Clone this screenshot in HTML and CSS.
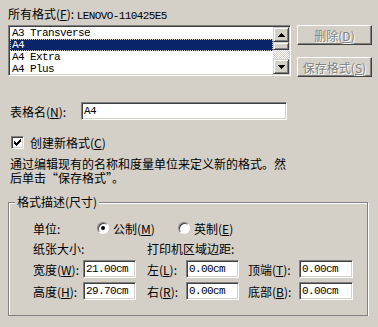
FILE: index.html
```html
<!DOCTYPE html>
<html lang="zh-CN">
<head>
    <meta charset="UTF-8">
    <title>格式</title>
    <link rel="stylesheet" href="styles.css">
</head>
<body>
    <div class="dialog">
        <div class="head">所有格式(<u>F</u>): <span class="mono">LENOVO-110425E5</span></div>

        <div class="list-row">
            <div class="listbox">
                <ul class="items mono">
                    <li>A3 Transverse</li>
                    <li class="sel">A4</li>
                    <li>A4 Extra</li>
                    <li>A4 Plus</li>
                </ul>
                <div class="scrollbar">
                    <div class="sb-btn">
                        <svg width="7" height="4" viewBox="0 0 7 4"><path d="M3 0h1v1h1v1h1v1h1v1H0V3h1V2h1V1h1z" fill="#000"/></svg>
                    </div>
                    <div class="sb-thumb"></div>
                    <div class="sb-track"></div>
                    <div class="sb-btn">
                        <svg width="7" height="4" viewBox="0 0 7 4"><path d="M0 0h7v1H6v1H5v1H4v1H3V3H2V2H1V1H0z" fill="#000"/></svg>
                    </div>
                </div>
            </div>
            <div class="buttons">
                <button class="btn" disabled>删除(<u>D</u>)</button>
                <button class="btn" disabled>保存格式(<u>S</u>)</button>
            </div>
        </div>

        <div class="name-row">
            <label class="name-label">表格名(<u>N</u>):</label>
            <div class="field name-field mono">A4</div>
        </div>

        <div class="check-row">
            <span class="checkbox">
                <svg width="7" height="7" viewBox="0 0 7 7"><path d="M6 0h1v3H6v1H5v1H4v1H3v1H2V6H1V5H0V2h1v1h1v1h1V3h1V2h1V1h1z" fill="#000"/></svg>
            </span>
            <span>创建新格式(<u>C</u>)</span>
        </div>

        <p class="hint">通过编辑现有的名称和度量单位来定义新的格式。然<br>后单击“保存格式”。</p>

        <div class="group">
            <span class="legend">格式描述(尺寸)</span>

            <div class="unit-row">
                <span class="unit-label">单位:</span>
                <span class="radio checked"></span>
                <span class="radio-text first">公制(<u>M</u>)</span>
                <span class="radio"></span>
                <span class="radio-text">英制(<u>E</u>)</span>
            </div>

            <div class="sizes">
                <span class="cap">纸张大小:</span>
                <span class="cap c3">打印机区域边距:</span>

                <span class="lbl">宽度(<u>W</u>):</span>
                <div class="field mono">21.00cm</div>
                <span class="lbl c3">左(<u>L</u>):</span>
                <div class="field mono">0.00cm</div>
                <span class="lbl c5">顶端(<u>T</u>):</span>
                <div class="field mono">0.00cm</div>

                <span class="lbl">高度(<u>H</u>):</span>
                <div class="field mono">29.70cm</div>
                <span class="lbl c3">右(<u>R</u>):</span>
                <div class="field mono">0.00cm</div>
                <span class="lbl c5">底部(<u>B</u>):</span>
                <div class="field mono">0.00cm</div>
            </div>
        </div>
    </div>
</body>
</html>
```

FILE: styles.css
```css
* {
    margin: 0;
    padding: 0;
    box-sizing: border-box;
}

body {
    background: #D4D0C8;
    font-family: "Noto Sans CJK SC", "Liberation Sans", sans-serif;
    font-size: 12px;
    color: #000;
}

u {
    text-decoration: underline;
    text-underline-offset: 1px;
}

.mono {
    font-family: "Liberation Mono", "DejaVu Sans Mono", monospace;
    font-size: 11px;
    letter-spacing: -0.6px;
}

.dialog {
    padding: 7px 0 0 8px;
}

.head {
    height: 14px;
    line-height: 14px;
}

/* list with formats */
.list-row {
    display: flex;
    margin-top: 4px;
}

.listbox {
    display: flex;
    width: 283px;
    height: 51px;
    background: #fff;
    border: 1px solid;
    border-color: #808080 #fff #fff #808080;
    box-shadow: inset 1px 1px #404040, inset -1px -1px #D4D0C8;
    padding: 1px;
}

.items {
    list-style: none;
    flex: 1;
    overflow: hidden;
}

.items li {
    height: 12px;
    line-height: 12px;
    padding-left: 2px;
    white-space: nowrap;
}

.items li.sel {
    background: #0A246A;
    color: #fff;
    outline: 1px dotted #D4D0C8;
    outline-offset: -1px;
}

.scrollbar {
    width: 16px;
    display: flex;
    flex-direction: column;
}

.sb-btn,
.sb-thumb {
    background: #D4D0C8;
    border: 1px solid;
    border-color: #D4D0C8 #404040 #404040 #D4D0C8;
    box-shadow: inset 1px 1px #fff, inset -1px -1px #808080;
}

.sb-btn {
    height: 15px;
    display: flex;
    justify-content: center;
    align-items: center;
}

.sb-thumb {
    height: 8px;
}

.sb-track {
    flex: 1;
    background: repeating-conic-gradient(#fff 0 25%, #D4D0C8 0 50%) 0 0 / 2px 2px;
}

.buttons {
    display: flex;
    flex-direction: column;
    gap: 12px;
    margin-left: 6px;
}

.btn {
    width: 75px;
    height: 20px;
    background: #D4D0C8;
    border: 1px solid;
    border-color: #fff #404040 #404040 #fff;
    box-shadow: inset -1px -1px #808080, inset 1px 1px #D4D0C8;
    font-family: "Noto Sans CJK SC", sans-serif;
    font-size: 12px;
    color: #808080;
    text-shadow: 1px 1px 0 #fff;
}

/* form name */
.name-row {
    display: flex;
    align-items: center;
    margin-top: 25px;
    padding-left: 2px;
}

.name-label {
    width: 71px;
}

.field {
    height: 18px;
    line-height: 14px;
    background: #fff;
    border: 1px solid;
    border-color: #808080 #fff #fff #808080;
    box-shadow: inset 1px 1px #404040, inset -1px -1px #D4D0C8;
    padding: 1px 2px;
    white-space: nowrap;
}

.name-field {
    width: 206px;
}

.check-row {
    display: flex;
    align-items: center;
    gap: 6px;
    margin-top: 16px;
    padding-left: 3px;
    height: 13px;
}

.checkbox {
    width: 13px;
    height: 13px;
    background: #fff;
    border: 1px solid;
    border-color: #808080 #fff #fff #808080;
    box-shadow: inset 1px 1px #404040, inset -1px -1px #D4D0C8;
    display: flex;
    justify-content: center;
    align-items: center;
}

.hint {
    margin-top: 8px;
    padding-left: 2px;
    line-height: 14px;
}

/* description group */
.group {
    position: relative;
    width: 360px;
    height: 114px;
    margin-top: 17px;
    border: 1px solid #808080;
    box-shadow: inset 1px 1px #fff, 1px 1px 0 #fff;
    padding: 17px 0 0 24px;
}

.legend {
    position: absolute;
    top: -8px;
    left: 6px;
    padding: 0 2px;
    background: #D4D0C8;
    line-height: 14px;
}

.unit-row {
    display: flex;
    align-items: center;
    height: 16px;
}

.unit-label {
    width: 64px;
}

.radio {
    width: 12px;
    height: 12px;
    border-radius: 50%;
    background: #fff;
    border: 1px solid;
    border-color: #808080 #fff #fff #808080;
    box-shadow: inset 1px 1px #404040;
    position: relative;
}

.radio.checked::after {
    content: "";
    position: absolute;
    left: 3px;
    top: 3px;
    width: 4px;
    height: 4px;
    border-radius: 50%;
    background: #000;
}

.radio-text {
    margin-left: 4px;
}

.radio-text.first {
    width: 65px;
}

.sizes {
    display: grid;
    grid-template-columns: 50px 53px 50px 53px 60px 54px;
    grid-template-rows: 16px 18px 18px;
    row-gap: 4px;
    align-items: center;
    margin-top: 4px;
}

.sizes .cap {
    grid-column: 1 / span 2;
}

.sizes .cap.c3 {
    grid-column: 3 / span 4;
}

.c3 {
    padding-left: 11px;
}

.c5 {
    padding-left: 9px;
}
```
